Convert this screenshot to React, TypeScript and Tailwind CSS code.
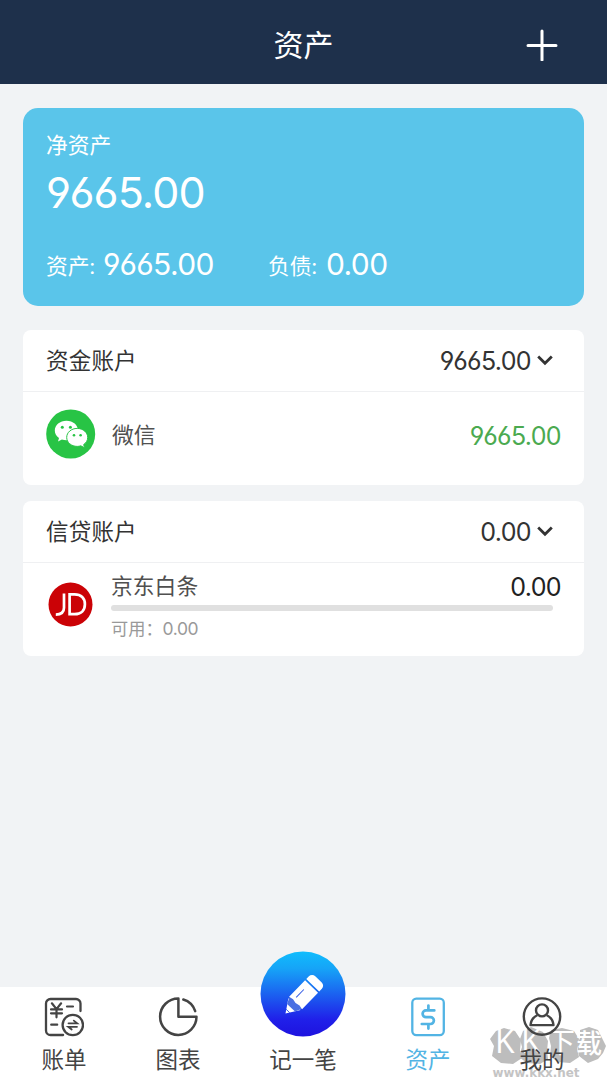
import type { ReactNode } from "react";

function Amount({ value, className = "" }: { value: string; className?: string }) {
  return (
    <span className={`font-[Inter,sans-serif] [font-feature-settings:'cv03','cv04'] ${className}`}>
      {value}
    </span>
  );
}

function Chevron() {
  return (
    <svg className="-mt-[2px] block h-4 w-4" viewBox="0 0 16 16" fill="none" stroke="#333" strokeWidth="2.800">
      <path d="M1.200 4.600 8 11.200l6.800-6.600" />
    </svg>
  );
}

function WechatIcon() {
  return (
    <svg className="-mt-[2px] block h-[50px] w-[50px]" viewBox="0 0 50 50">
      <circle cx="24.700" cy="25" r="24.500" fill="#28c445" />
      <path
        fill="#fff"
        d="M20.500 11.800c-6.600 0-11.700 4.300-11.700 9.700 0 3.100 1.600 5.800 4.200 7.600l-1 3.400 3.900-2c1.500.4 3 .7 4.600.7 6.500 0 11.500-4.300 11.500-9.700s-5-9.700-11.500-9.700Z"
      />
      <path
        fill="#fff"
        stroke="#28c445"
        strokeWidth="1"
        d="M31.200 19.400c-5.900 0-10.500 4-10.500 9s4.600 9 10.500 9c1.300 0 2.500-.2 3.600-.6l3.700 2-.8-3.300c2.500-1.600 4-4.100 4-7.100 0-5-4.600-9-10.500-9Z"
      />
      <g fill="#28c445">
        <circle cx="16.300" cy="18.200" r="1.500" />
        <circle cx="24.400" cy="18.200" r="1.500" />
        <circle cx="28" cy="26.200" r="1.300" />
        <circle cx="34.600" cy="26.200" r="1.300" />
      </g>
    </svg>
  );
}

function JdIcon() {
  return (
    <svg className="block h-[45px] w-[45px]" viewBox="0 0 45 45" fill="none">
      <circle cx="22.500" cy="22.500" r="22" fill="#cb0206" />
      <path
        d="M7.800 32.600c5.800 0 8.200-2.300 8.200-6.800V11.500M21.600 12.400v19.800h5c6.600 0 10.300-3.900 10.300-10s-3.700-9.800-10.300-9.800h-5Z"
        stroke="#fff"
        strokeWidth="2.700"
      />
    </svg>
  );
}

function BillIcon() {
  return (
    <svg className="block h-10 w-10" viewBox="0 0 40 40" fill="none" stroke="#444" strokeWidth="2.300" strokeLinecap="round">
      <path d="M36.500 14V6.500a4.500 4.500 0 0 0-4.500-4.500H6.500A4.500 4.500 0 0 0 2 6.500v27A4.500 4.500 0 0 0 6.500 38h12.600" />
      <path d="m7.900 6.300 4.600 5.800 4.600-5.800M12.500 12.100v8.200M7 12.400h11M7 16.300h11" strokeWidth="2.200" />
      <path d="M23 9.500h6M7.200 27.700h6" strokeWidth="2.200" />
      <circle cx="28.800" cy="28" r="10.200" />
      <path d="M24.500 26.300h8.700l-3.400-2.700M33 29.800h-8.700l3.400 2.700" strokeWidth="1.800" />
    </svg>
  );
}

function ChartIcon() {
  return (
    <svg className="block h-10 w-10" viewBox="0 0 40 40" fill="none" stroke="#444" strokeWidth="2.500" strokeLinejoin="round" strokeLinecap="round">
      <path d="M20.400 1.500A18.200 18.200 0 1 0 38.500 19.800H20.400Z" />
      <path d="M25.300 2.500a18 18 0 0 1 11.900 11.600" />
    </svg>
  );
}

function AssetIcon() {
  return (
    <svg className="block h-10 w-10" viewBox="0 0 40 40" fill="none" stroke="#52b4e4">
      <rect x="4.300" y="1.700" width="31.500" height="36.400" rx="4" strokeWidth="2.300" />
      <path
        d="M26.300 13.400H18a3.400 3.400 0 0 0 0 6.800h4.500a3.400 3.400 0 0 1 0 6.800h-8.700M20.400 8.500v4.900M20.400 27v4.600"
        strokeWidth="2.700"
        strokeLinecap="round"
      />
    </svg>
  );
}

function MineIcon() {
  return (
    <svg className="block h-10 w-10" viewBox="0 0 40 40" fill="none" stroke="#444" strokeWidth="2.400">
      <circle cx="20" cy="19.600" r="18.200" />
      <circle cx="20" cy="13.400" r="6" />
      <path d="M15.200 18.200c-4 2-6.300 5.500-6.700 9.900h23c-.4-4.400-2.700-7.900-6.700-9.900" strokeLinejoin="round" />
    </svg>
  );
}

function RecordIcon() {
  return (
    <svg className="block h-[86px] w-[86px]" viewBox="0 0 86 86">
      <defs>
        <linearGradient id="record" x1="0" y1="0" x2="0" y2="1">
          <stop offset="0" stopColor="#10bdfd" />
          <stop offset=".2" stopColor="#16a4f7" />
          <stop offset=".8" stopColor="#2020e9" />
          <stop offset="1" stopColor="#1e12df" />
        </linearGradient>
      </defs>
      <circle cx="43" cy="43" r="42.500" fill="url(#record)" />
      <g transform="translate(25.500 62.500) rotate(-46)">
        <path d="M0 0 13-8.500V8.500Z" fill="#fff" />
        <path d="M8-5.500 15.500-9V9L8 5.500Z" fill="#4a70e2" />
        <path d="M14.500-9H37.500V9H14.500l1-4.500L14.500 0l1-4.500Z" fill="#fff" />
        <path d="M39.200-9H43a4.500 4.500 0 0 1 4.500 4.500v9A4.500 4.500 0 0 1 43 9h-3.800Z" fill="#fff" />
        <path d="M19-3.500h11" stroke="#3159e4" strokeWidth="1" />
        <path d="M3.500-2.500v5" stroke="#3159e4" strokeWidth=".9" />
      </g>
    </svg>
  );
}

function SectionHeader({ title, amount }: { title: string; amount: string }) {
  return (
    <div className="flex h-[62px] items-center border-b border-[#eff0f2] pr-[31px] pl-[23px]">
      <span className="flex-1 pt-px text-[22.500px] leading-8 tracking-[0.200px]">{title}</span>
      <Amount value={amount} className="mr-[6px] pt-[3px] text-[25px] tracking-[-0.650px]" />
      <Chevron />
    </div>
  );
}

function Tab({ label, icon, active = false }: { label: string; icon: ReactNode; active?: boolean }) {
  return (
    <div className={`flex w-[114px] flex-col items-center pt-[10px] ${active ? "text-[#52b4e4]" : "text-[#444]"}`}>
      {icon}
      <span className="mt-[7px] text-[22.500px] leading-8">{label}</span>
    </div>
  );
}

function Watermark() {
  return (
    <svg
      className="pointer-events-none absolute right-0 bottom-0 h-[56px] w-[117px]"
      viewBox="0 0 117 56"
      fontFamily="'Open Sans','Noto Sans CJK SC',sans-serif"
    >
      <g fill="#bdbdbd">
        <path d="m6 7 8-3 11 3 6 9-1 10 2 8-9 6-12-1-9-7 2-10-4-7Z" />
        <path d="m33 7 8-4 12 5 5 9-1 10 1 8-8 5-13-1-8-6 3-10-2-8Z" />
        <path d="m61 6 11-2 12 3 5 8-2 9 2 9-9 6-12-1-8-6 1-10-2-8Z" />
        <path d="m90 6 9-3 9 3 4 8 4 8-3 7-5 6-10 4-9-7-2-11 3-7Z" />
      </g>
      <g fill="#fff">
        <text x="5" y="29" fontSize="32">K</text>
        <text x="31" y="29" fontSize="32">K</text>
        <text x="57" y="29" fontSize="28">下</text>
        <text x="86" y="29" fontSize="26" fontWeight="500">载</text>
      </g>
      <text x="2.500" y="53" fill="#c4c4c4" fontSize="11.500" fontWeight="700" textLength="87" lengthAdjust="spacingAndGlyphs" fontFamily="'DejaVu Sans',sans-serif">
        www.kkx.net
      </text>
    </svg>
  );
}

export default function App() {
  return (
    <div className="flex h-[1080px] w-[607px] flex-col overflow-hidden bg-[#f1f3f5] font-[Lato,'Noto_Sans_CJK_SC',sans-serif] text-[#333]">
      <header className="grid h-[84px] shrink-0 grid-cols-[1fr_auto_1fr] items-center bg-[#1e304b] text-white">
        <h1 className="col-start-2 pt-[4px] text-[30px] leading-10">资产</h1>
        <svg className="mt-[6px] mr-[49px] block h-8 w-8 justify-self-end" viewBox="0 0 32 32" stroke="white" strokeWidth="3" strokeLinecap="round">
          <path d="M16 2v29M2 16.500h28" />
        </svg>
      </header>

      <main className="flex flex-1 flex-col px-[23px] pt-[23.500px]">
        <section className="h-[198.500px] rounded-[15px] bg-[#5ac5ea] px-[23px] pt-[21px] text-white">
          <p className="text-[21.800px] leading-8">净资产</p>
          <p className="mt-[5px] flex leading-[52px]">
            <Amount value="9665.00" className="text-[43px] tracking-[-0.900px]" />
          </p>
          <div className="mt-[28px] flex h-9 items-center">
            <p className="flex w-[222px] items-center">
              <span className="w-[57px] pt-[5px] text-[21.800px]">资产:</span>
              <Amount value="9665.00" className="pt-px text-[30px] tracking-[-0.600px]" />
            </p>
            <p className="flex items-center">
              <span className="w-[58px] pt-[5px] text-[21.800px]">负债:</span>
              <Amount value="0.00" className="pt-px text-[30px] tracking-[-0.600px]" />
            </p>
          </div>
        </section>

        <section className="mt-6 h-[155px] rounded-[8px] bg-white">
          <SectionHeader title="资金账户" amount="9665.00" />
          <div className="flex h-[86px] items-center px-[23px]">
            <WechatIcon />
            <span className="ml-[16px] flex-1 text-[21.800px] text-[#505050]">微信</span>
            <Amount value="9665.00" className="pt-[3px] text-[25px] tracking-[-0.650px] text-[#4baa50]" />
          </div>
        </section>

        <section className="mt-4 h-[155px] rounded-[8px] bg-white">
          <SectionHeader title="信贷账户" amount="0.00" />
          <div className="flex h-[93px] pr-[23px] pl-[25px]">
            <div className="mt-[19px]">
              <JdIcon />
            </div>
            <div className="ml-[18px] flex-1 pt-2">
              <div className="flex h-8 items-center justify-between">
                <span className="pb-px text-[21.800px] text-[#505050]">京东白条</span>
                <Amount value="0.00" className="pt-px text-[25px] tracking-[-0.650px] text-[#222]" />
              </div>
              <div className="mt-[2px] mr-2 h-[6px] rounded-full bg-[#e0e0e0]" />
              <p className="mt-[6px] text-[17.200px] leading-6 text-[#999]">
                可用：
                <Amount value="0.00" className="text-[17.500px] tracking-[-0.400px]" />
              </p>
            </div>
          </div>
        </section>
      </main>

      <nav className="relative flex h-[93px] shrink-0 bg-white pl-[7px]">
        <Watermark />
        <div className="relative flex">
          <Tab label="账单" icon={<BillIcon />} />
          <Tab label="图表" icon={<ChartIcon />} />
          <div className="-mt-9 flex w-[136px] flex-col items-center text-[#444]">
            <RecordIcon />
            <span className="mt-[7px] text-[22.500px] leading-8">记一笔</span>
          </div>
          <Tab label="资产" icon={<AssetIcon />} active />
          <Tab label="我的" icon={<MineIcon />} />
        </div>
      </nav>
    </div>
  );
}
